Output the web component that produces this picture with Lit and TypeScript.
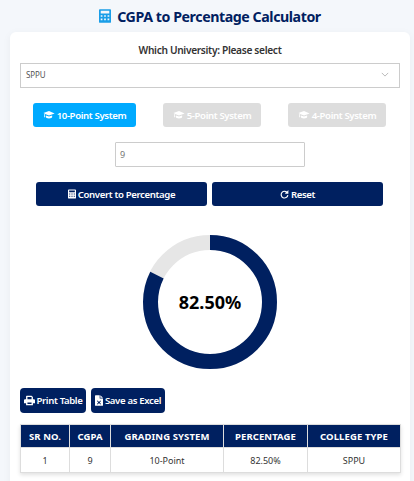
import { LitElement, html, css, svg } from "lit";
import { customElement } from "lit/decorators.js";

const cap = svg`<svg class="ic" viewBox="0 0 640 512" width="12" height="10"><path fill="currentColor" d="M320 40 20 150l76 30-8 10c-10 12-12 24-12 38-10 6-14 14-14 24 0 8 4 16 10 22l-10 90c0 6 4 10 10 10h32c6 0 10-4 10-10l-10-90c6-6 10-14 10-22 0-10-4-18-12-24 0-10 4-18 12-24l206 78 300-110z"/><path fill="currentColor" d="M156 280l-8 70c0 50 78 90 172 90s172-40 172-90l-8-70-164 60z"/></svg>`;
const calc = svg`<svg class="ic" viewBox="0 0 14 16" width="8" height="10"><path fill="currentColor" fill-rule="evenodd" d="M1.500 0h11A1.500 1.500 0 0 1 14 1.500v13a1.500 1.500 0 0 1-1.500 1.500h-11A1.500 1.500 0 0 1 0 14.500v-13A1.500 1.500 0 0 1 1.500 0zM2 2v3h10V2zM2 7v2h2V7zm4 0v2h2V7zm4 0v2h2V7zM2 11v2h2v-2zm4 0v2h2v-2zm4 0v2h2v-2z"/></svg>`;

@customElement("app-root")
export class AppRoot extends LitElement {
  static styles = css`
    :host { display: block; height: 481px; overflow: hidden; background: #f4f7fb; font-family: "Noto Sans", sans-serif; color: #333; }
    .title { margin: 0 4px 0 10px; height: 32px; display: flex; align-items: center; justify-content: center; gap: 6px; font-size: 14.200px; letter-spacing: -.43px; font-weight: 700; color: #002060; white-space: nowrap; }
    .card { margin: 0 4px 0 10px; padding: 10px 10px 20px; background: #fff; border-radius: 6px; box-shadow: 0 2px 8px rgba(0,0,0,.05); display: flex; flex-direction: column; align-items: stretch; }
    .label { text-align: center; font-size: 10.200px; letter-spacing: -.33px; font-weight: 600; color: #333; line-height: 16px; margin-bottom: 5px; }
    .select { height: 25px; box-sizing: border-box; border: 1px solid #ccc; display: flex; align-items: center; justify-content: space-between; padding: 0 10px 2px 5px; font-size: 8px; letter-spacing: -.1px; color: #555; }
    .systems { display: flex; justify-content: space-between; padding: 15px 14px 15px 13px; }
    .sys { height: 24px; border-radius: 3px; display: flex; align-items: center; justify-content: center; gap: 2px; color: #fff; font-size: 9.600px; letter-spacing: -.36px; font-weight: 600; background: #ddd; width: 98px; white-space: nowrap; }
    .sys.on { background: #00aaff; width: 103px; }
    .input { align-self: center; width: 190px; height: 25px; box-sizing: border-box; border: 1px solid #ccc; border-radius: 1px; padding: 0 0 0 4px; display: flex; align-items: center; font-size: 9px; color: #777; }
    .actions { display: flex; gap: 5px; padding: 15px 17px 0 16px; }
    .btn { background: #002060; color: #fff; border-radius: 3px; display: flex; align-items: center; justify-content: center; gap: 2px; font-size: 9.600px; letter-spacing: -.36px; font-weight: 600; white-space: nowrap; }
    .actions .btn { flex: 1; height: 24px; }
    .donut { position: relative; width: 134px; height: 135px; align-self: center; margin-top: 29px; }
    .donut svg { display: block; }
    .pct { position: absolute; inset: 0 0 1px; display: flex; align-items: center; justify-content: center; font-size: 18px; font-weight: 700; color: #000; }
    .tools { display: flex; gap: 5px; margin-top: 18px; }
    .tools .btn { height: 25px; border-radius: 4px; }
    .print { width: 66px; }
    .excel { width: 74px; }
    table { margin-top: 11px; width: 380px; table-layout: fixed; border-collapse: collapse; box-shadow: 0 2px 4px rgba(0,0,0,.12); font-size: 9px; }
    th { background: #002060; color: #fff; font-weight: 700; font-size: 9.500px; height: 22px; padding: 0; border: 1px solid #ddd; letter-spacing: .1px; }
    td { height: 24px; padding: 0; text-align: center; border: 1px solid #ddd; color: #333; }
    .ic { flex: none; }
  `;

  render() {
    return html`
      <h1 class="title">
        <svg viewBox="0 0 14 16" width="12" height="14"><path fill="#1a9ee8" fill-rule="evenodd" d="M1 0h12a1 1 0 0 1 1 1v14a1 1 0 0 1-1 1H1a1 1 0 0 1-1-1V1a1 1 0 0 1 1-1zM2 2v3h10V2zM2 7v2h2V7zm4 0v2h2V7zm4 0v2h2V7zM2 11v2h2v-2zm4 0v2h2v-2zm4 0v2h2v-2z"/></svg>
        <span>CGPA to Percentage Calculator</span>
      </h1>
      <div class="card">
        <div class="label">Which University: Please select</div>
        <div class="select">
          <span>SPPU</span>
          <svg viewBox="0 0 10 6" width="8" height="5"><path d="M1 1l4 4 4-4" fill="none" stroke="#aaa" stroke-width="1"/></svg>
        </div>
        <div class="systems">
          <div class="sys on">${cap}<span>10-Point System</span></div>
          <div class="sys">${cap}<span>5-Point System</span></div>
          <div class="sys">${cap}<span>4-Point System</span></div>
        </div>
        <div class="input">9</div>
        <div class="actions">
          <div class="btn">${calc}<span>Convert to Percentage</span></div>
          <div class="btn">
            <svg class="ic" viewBox="0 0 14 14" width="9" height="9"><path d="M11.500 4.500A5.200 5.200 0 1 0 12.200 8" fill="none" stroke="currentColor" stroke-width="1.800"/><path fill="currentColor" d="M13 0v6H7.500z"/></svg>
            <span>Reset</span>
          </div>
        </div>
        <div class="donut">
          <svg viewBox="0 0 134 134" width="134" height="134">
            <circle cx="67" cy="67" r="59.500" fill="none" stroke="#e6e6e6" stroke-width="15"/>
            <circle cx="67" cy="67" r="59.500" fill="none" stroke="#002060" stroke-width="15" pathLength="100" stroke-dasharray="82.500 100" transform="rotate(-90 67 67)"/>
          </svg>
          <div class="pct">82.50%</div>
        </div>
        <div class="tools">
          <div class="btn print">
            <svg class="ic" viewBox="0 0 16 16" width="11" height="11"><path fill="currentColor" fill-rule="evenodd" d="M4 1h7l2 2v3h1.500A1.500 1.500 0 0 1 16 7.500V12h-3v3H3v-3H0V7.500A1.500 1.500 0 0 1 1.500 6H3V2a1 1 0 0 1 1-1zm1 2v3h6V3zm0 8v2h6v-2z"/></svg>
            <span>Print Table</span>
          </div>
          <div class="btn excel">
            <svg class="ic" viewBox="0 0 12 16" width="8" height="11"><path fill="currentColor" fill-rule="evenodd" d="M1 0h6v5h5v10a1 1 0 0 1-1 1H1a1 1 0 0 1-1-1V1a1 1 0 0 1 1-1zm7 0 4 4H8zM4 8l-1 .7L4.800 11 3 13.300l1 .7L6 11.800 8 14l1-.7L7.200 11 9 8.700 8 8l-2 2.200z"/></svg>
            <span>Save as Excel</span>
          </div>
        </div>
        <table>
          <colgroup><col style="width:49px"/><col style="width:41px"/><col style="width:113px"/><col style="width:84px"/><col style="width:93px"/></colgroup>
          <thead><tr><th>SR NO.</th><th>CGPA</th><th>GRADING SYSTEM</th><th>PERCENTAGE</th><th>COLLEGE TYPE</th></tr></thead>
          <tbody><tr><td>1</td><td>9</td><td>10-Point</td><td>82.50%</td><td>SPPU</td></tr></tbody>
        </table>
      </div>
    `;
  }
}
